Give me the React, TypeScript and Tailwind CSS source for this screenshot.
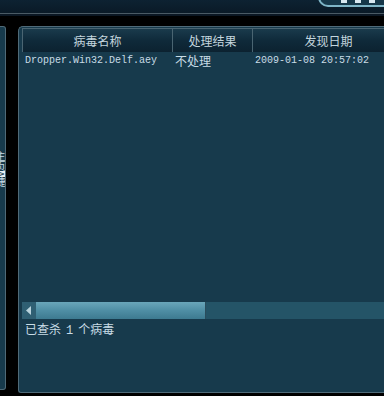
import React from 'react'

const cols = [
  { title: '病毒名称', w: 'w-[150px]' },
  { title: '处理结果', w: 'w-[80px]' },
  { title: '发现日期', w: 'w-[152px]' },
]

export default function App() {
  return (
    <div className="w-[384px] h-[396px] bg-black overflow-hidden flex flex-col font-['Noto_Sans_CJK_SC',sans-serif]">
      {/* top bar */}
      <div className="relative h-[13px] bg-gradient-to-b from-[#0d2232] to-[#0a1a27] shrink-0">
        <div className="absolute right-0 -top-[6px] w-[66px] h-[13px] rounded-bl-[10px] border-l-2 border-b-2 border-[#7fb6c8] bg-[#16384a] flex items-center justify-center gap-[8px] pl-3 pt-1">
          <span className="w-[6px] h-[3px] bg-[#d8e8f0]" />
          <span className="w-[6px] h-[3px] bg-[#d8e8f0]" />
          <span className="w-[6px] h-[3px] bg-[#d8e8f0]" />
        </div>
      </div>
      <div className="h-[1px] bg-[#4a5a64] shrink-0" />
      <div className="h-[2px] bg-[#0a1622] shrink-0" />
      <div className="h-[10px] shrink-0" />

      <div className="flex flex-1 min-h-0 pb-[3px]">
        {/* left panel (clipped) */}
        <div className="relative w-[6px] mb-[3px] bg-[#173a4c] border-r border-t border-b border-[#4f6a78] rounded-tr-[3px] rounded-br-[3px] overflow-hidden">
          <div className="absolute top-[124px] -left-[5px] w-[10px] [writing-mode:vertical-rl] text-[10px] leading-[10px] text-[#c8dce6]">
            主页<span className="bg-[#e8f0f4] text-[#173a4c]">A</span>捷
          </div>
        </div>
        <div className="w-[12px]" />

        {/* main panel */}
        <div className="flex-1 flex flex-col bg-[#173a4c] border-l border-t border-b border-[#4f6a78] rounded-tl-[5px] rounded-bl-[3px] pl-[3px] pt-[1px] overflow-hidden">
          {/* header */}
          <div className="flex h-[24px] shrink-0 border-l border-t border-[#4a6572] bg-gradient-to-b from-[#1a3b4c] via-[#0f2a3a] to-[#0c2230]">
            {cols.map((c) => (
              <div
                key={c.title}
                className={`${c.w} shrink-0 flex items-center justify-center text-[12px] text-[#c4d6de] border-r border-[#4a6572]`}
              >
                {c.title}
              </div>
            ))}
          </div>
          {/* row */}
          <div className="flex h-[17px] items-center shrink-0 text-[#c8dce6]">
            <div className="w-[150px] shrink-0 pl-[3px] font-['Liberation_Mono',monospace] text-[10px]">Dropper.Win32.Delf.aey</div>
            <div className="w-[80px] shrink-0 pl-[3px] text-[12px]">不处理</div>
            <div className="flex-1 pl-[3px] font-['Liberation_Mono',monospace] text-[10px] whitespace-nowrap">2009-01-08 20:57:02</div>
          </div>
          <div className="flex-1" />
          {/* horizontal scrollbar */}
          <div className="flex h-[17px] shrink-0 bg-[#245467] mb-[2px]">
            <div className="w-[14px] flex items-center justify-center bg-[#2f5f73]">
              <svg width="6" height="9" viewBox="0 0 6 9">
                <path d="M5 0 L0 4.5 L5 9 Z" fill="#b8d2dc" />
              </svg>
            </div>
            <div className="w-[170px] bg-gradient-to-b from-[#6aa6ba] via-[#4f8ea4] to-[#3d7a90] border-r border-[#2a4c5c]" />
          </div>
          <div className="h-[71px] shrink-0 pl-[3px] text-[12px] leading-[16px] text-[#c8dce6]">
            已查杀<span className="font-['Liberation_Mono',monospace] mx-[5px]">1</span>个病毒
          </div>
        </div>
      </div>
    </div>
  )
}
